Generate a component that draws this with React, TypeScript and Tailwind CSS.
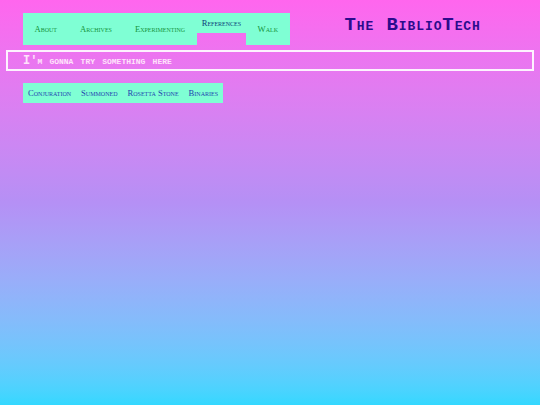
const navLinks = [
  { label: "About", active: false },
  { label: "Archives", active: false },
  { label: "Experimenting", active: false },
  { label: "References", active: true },
  { label: "Walk", active: false },
];

const subLinks = ["Conjuration", "Summoned", "Rosetta Stone", "Binaries"];

export default function App() {
  return (
    <div className="min-h-[405px] w-full bg-gradient-to-b from-[#ff66ee] via-[#b590f5] to-[#33d8ff] pt-[13px]">
      <div className="flex items-start">
        <nav className="ml-[23px] flex items-start font-['Liberation_Serif',serif] text-[8.6px] [font-variant:small-caps]">
          {navLinks.map((link) =>
            link.active ? (
              <a
                key={link.label}
                className="flex h-[20px] items-center bg-[#7fffd4] px-[5px] text-[#0d3c7a]"
              >
                {link.label}
              </a>
            ) : (
              <a
                key={link.label}
                className="flex h-[32px] items-center bg-[#7fffd4] px-[11.5px] pt-[1px] text-[#15963c]"
              >
                {link.label}
              </a>
            ),
          )}
        </nav>
        <h1 className="ml-[55px] mt-0 font-['Liberation_Mono',monospace] text-[19px] font-bold leading-[24px] tracking-[0.9px] text-[#2b0c8c] [font-variant:small-caps]">
          The BiblioTech
        </h1>
      </div>

      <div className="mx-[6px] mt-[5px] flex h-[21px] items-center border-2 border-white/90 px-[15px]">
        <span className="font-['Liberation_Mono',monospace] text-[12px] font-bold text-[#ffe2fb] [font-variant:small-caps]">
          I'm gonna try something here
        </span>
      </div>

      <nav className="ml-[23px] mt-[12px] inline-flex h-[20px] items-center bg-[#7fffd4] font-['Liberation_Serif',serif] text-[8.6px] [font-variant:small-caps]">
        {subLinks.map((link) => (
          <a key={link} className="px-[5px] pt-[1px] text-[#1f3fb0]">
            {link}
          </a>
        ))}
      </nav>
    </div>
  );
}
